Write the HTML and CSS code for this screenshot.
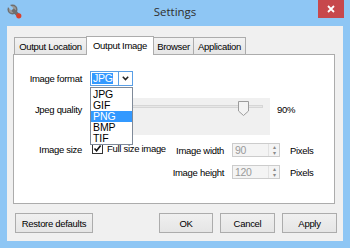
FILE: index.html
```html
<!DOCTYPE html>
<html>
<head>
    <title>Settings</title>
    <meta charset="utf-8">
    <link rel="stylesheet" href="styles.css">
</head>
<body>
    <div class="window">
        <div class="titlebar">
            <svg class="app-icon" width="15" height="15" viewBox="0 0 15 15">
                <defs>
                    <mask id="notch">
                        <rect width="15" height="15" fill="#fff"/>
                        <rect x="-1.5" y="-6" width="3" height="5.8" fill="#000" transform="translate(5.5 5.5) rotate(-45)"/>
                    </mask>
                </defs>
                <g mask="url(#notch)">
                    <circle cx="5.5" cy="5.5" r="5" fill="#6f6f6f"/>
                    <circle cx="5.5" cy="5.5" r="3.6" fill="#9a9a9a"/>
                    <path d="M5.5 5.5L11.5 11.5" stroke="#6f6f6f" stroke-width="3.6"/>
                </g>
                <circle cx="11.8" cy="11.8" r="2.6" fill="#d8402c"/>
            </svg>
            <div class="title">Settings</div>
            <div class="close">
                <svg width="8" height="8" viewBox="0 0 8 8">
                    <path d="M1 1L7 7M7 1L1 7" stroke="#fff" stroke-width="1.8"/>
                </svg>
            </div>
        </div>

        <div class="client">
            <div class="tabs">
                <div class="tab tab-location">Output Location</div>
                <div class="tab tab-image active">Output Image</div>
                <div class="tab tab-browser">Browser</div>
                <div class="tab tab-app">Application</div>
            </div>

            <div class="panel">
                <div class="row row-format">
                    <div class="lbl">Image format</div>
                    <div class="combo">
                        <span class="combo-value">JPG</span>
                        <span class="combo-btn">
                            <svg width="7" height="5" viewBox="0 0 7 5">
                                <path d="M0.8 0.8L3.5 3.6L6.2 0.8" fill="none" stroke="#222" stroke-width="1.5"/>
                            </svg>
                        </span>
                        <ul class="combo-list">
                            <li>JPG</li>
                            <li>GIF</li>
                            <li class="hot">PNG</li>
                            <li>BMP</li>
                            <li>TIF</li>
                        </ul>
                    </div>
                </div>

                <div class="row row-quality">
                    <div class="lbl">Jpeg quality</div>
                    <div class="slider">
                        <div class="track"></div>
                        <svg class="thumb" width="11" height="15" viewBox="0 0 11 15">
                            <path d="M0.5 0.5H10.5V10L5.5 14.5L0.5 10Z" fill="#f3f3f3" stroke="#9c9c9c"/>
                        </svg>
                    </div>
                    <div class="percent">90%</div>
                </div>

                <div class="row row-size">
                    <div class="lbl">Image size</div>
                    <div class="check-group">
                        <span class="checkbox">
                            <svg width="9" height="9" viewBox="0 0 9 9">
                                <path d="M1.5 4.5L3.6 6.8L7.6 1.6" fill="none" stroke="#111" stroke-width="1.6"/>
                            </svg>
                        </span>
                        <span>Full size image</span>
                    </div>
                    <div class="dims">
                        <div class="dim-lbl">Image width</div>
                        <div class="spin">
                            <span class="spin-val">90</span>
                            <span class="spin-btns"><i>▴</i><i>▾</i></span>
                        </div>
                        <div>Pixels</div>

                        <div class="dim-lbl">Image height</div>
                        <div class="spin">
                            <span class="spin-val">120</span>
                            <span class="spin-btns"><i>▴</i><i>▾</i></span>
                        </div>
                        <div>Pixels</div>
                    </div>
                </div>
            </div>

            <div class="buttons">
                <button class="btn btn-restore">Restore defaults</button>
                <span class="spacer"></span>
                <button class="btn btn-ok">OK</button>
                <button class="btn">Cancel</button>
                <button class="btn">Apply</button>
            </div>
        </div>
    </div>
</body>
</html>
```

FILE: styles.css
```css
:root {
    --frame: #8ec6f4;
    --face: #f0f0f0;
    --border: #acacac;
    --text: #000000;
    --hilite: #3399ff;
}

* {
    box-sizing: border-box;
}

body {
    margin: 0;
    font-family: 'Liberation Sans', Arial, sans-serif;
    font-size: 9.5px;
    letter-spacing: -0.3px;
    color: var(--text);
}

.window {
    width: 350px;
    height: 248px;
    background-color: var(--frame);
    display: flex;
    flex-direction: column;
}

.titlebar {
    height: 26px;
    display: grid;
    grid-template-columns: 1fr auto 1fr;
    align-items: start;
}

.app-icon {
    margin: 4px 0 0 7px;
}

.title {
    font-family: 'Open Sans', 'Liberation Sans', sans-serif;
    font-size: 11.5px;
    letter-spacing: 0;
    color: #2e2e2e;
    margin-top: 4px;
}

.close {
    justify-self: end;
    width: 26px;
    height: 18px;
    margin-right: 6px;
    background-color: #c7484c;
    display: flex;
    align-items: center;
    justify-content: center;
}

.client {
    flex: 1;
    margin: 0 7px 7px;
    padding: 10px 8px 0 6px;
    background-color: var(--face);
}

/* tabs */
.tabs {
    height: 18px;
    display: flex;
    align-items: flex-end;
    padding-left: 1px;
}

.tab {
    height: 17px;
    border: 1px solid var(--border);
    border-bottom: none;
    background: linear-gradient(#f2f2f2, #e6e6e6);
    display: flex;
    align-items: center;
    justify-content: center;
    margin-left: -1px;
}

.tab:first-child {
    margin-left: 0;
}

.tab-location { width: 73px; }
.tab-image { width: 68px; }
.tab-browser { width: 41px; }
.tab-app { width: 53px; }

.tab.active {
    height: 19px;
    margin-bottom: -1px;
    background: #ffffff;
    position: relative;
    z-index: 1;
    padding-bottom: 2px;
}

.panel {
    height: 150px;
    border: 1px solid var(--border);
    background-color: #ffffff;
}

/* rows */
.row {
    display: flex;
}

.lbl {
    width: 76px;
    padding-right: 8px;
    text-align: right;
}

.row-format {
    margin-top: 16px;
    height: 15px;
    align-items: center;
}

.combo {
    position: relative;
    width: 43px;
    height: 15px;
    border: 1px solid #5a9fe6;
    display: flex;
    align-items: stretch;
}

.combo-value {
    margin: 1px 5px 1px 1px;
    padding: 0 1px;
    width: 21px;
    background-color: var(--hilite);
    color: #ffffff;
    font-size: 10.5px;
    letter-spacing: -0.2px;
    line-height: 11px;
}

.combo-btn {
    flex: 1;
    border-left: 1px solid #5a9fe6;
    display: flex;
    align-items: center;
    justify-content: center;
}

.combo-list {
    position: absolute;
    top: 15px;
    left: -1px;
    width: 43px;
    margin: 0;
    padding: 1px 0 0;
    list-style: none;
    background-color: #ffffff;
    border: 1px solid #7f8a99;
    z-index: 2;
}

.combo-list li {
    height: 11px;
    line-height: 11px;
    padding-left: 2px;
    font-size: 10.5px;
    letter-spacing: -0.1px;
}

.combo-list li.hot {
    background-color: var(--hilite);
    color: #ffffff;
}

.row-quality {
    margin-top: 12px;
    height: 37px;
}

.row-quality .lbl {
    margin-top: 6px;
}

.slider {
    position: relative;
    width: 180px;
    height: 37px;
    background-color: var(--face);
}

.track {
    margin: 7px 7px 0;
    height: 3px;
    border: 1px solid #d6d6d6;
    background-color: #e7e7e7;
}

.thumb {
    position: absolute;
    left: 148px;
    top: 3px;
}

.percent {
    margin: 6px 0 0 7px;
}

.row-size {
    margin-top: 8px;
}

.row-size .lbl {
    padding-top: 1px;
}

.check-group {
    flex: 1;
    display: flex;
    align-items: flex-start;
    gap: 4px;
    padding-left: 2px;
}

.checkbox {
    width: 11px;
    height: 11px;
    border: 1px solid #333333;
    background-color: #ffffff;
    display: flex;
    align-items: center;
    justify-content: center;
}

.dims {
    display: grid;
    grid-template-columns: 56px 48px 44px;
    column-gap: 8px;
    row-gap: 8px;
    align-items: center;
    margin-right: 2px;
}

.dims > div:nth-child(3n) {
    margin-left: 2px;
}

.dim-lbl {
    text-align: right;
}

.spin {
    height: 14px;
    border: 1px solid #cccccc;
    background-color: #f4f4f4;
    display: flex;
}

.spin-val {
    flex: 1;
    padding-left: 2px;
    color: #9a9a9a;
    line-height: 12px;
    font-size: 10.5px;
}

.spin-btns {
    width: 11px;
    display: flex;
    flex-direction: column;
    border-left: 1px solid #e2e2e2;
}

.spin-btns i {
    flex: 1;
    font-style: normal;
    font-size: 6px;
    line-height: 6px;
    text-align: center;
    color: #8a8a8a;
}

/* bottom buttons */
.buttons {
    display: flex;
    height: 20px;
    margin: 9px -2px 0 2px;
    gap: 7px;
}

.spacer {
    flex: 1;
}

.btn {
    width: 55px;
    height: 20px;
    padding: 0;
    border: 1px solid var(--border);
    background: linear-gradient(#f0f0f0, #e5e5e5);
    font-family: inherit;
    font-size: 9.5px;
    letter-spacing: -0.3px;
    color: var(--text);
}

.btn-restore {
    width: 78px;
}

.btn-ok {
    width: 54px;
}
```
